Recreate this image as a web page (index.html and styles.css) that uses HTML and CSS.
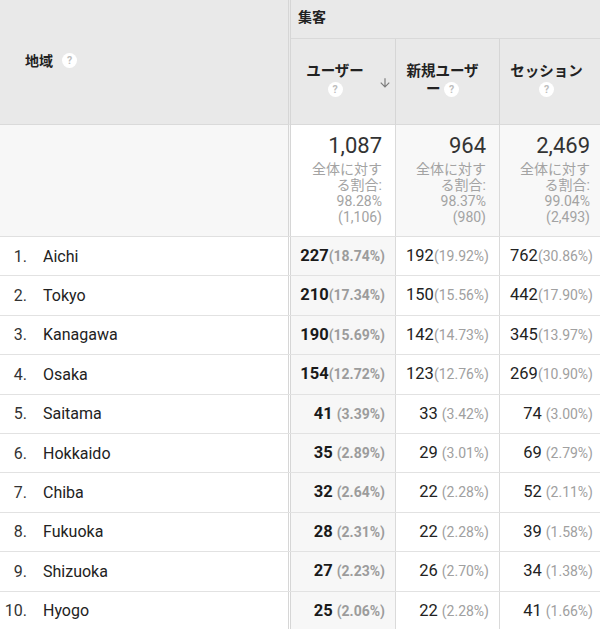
FILE: index.html
```html
<!DOCTYPE html>
<html lang="ja">
<head>
<meta charset="utf-8">
<link rel="stylesheet" href="styles.css">
</head>
<body>
<div class="report">
  <div class="head grid">
    <div class="dim-head"><span class="ht">地域</span><span class="help">?</span></div>
    <div class="group">集客</div>
    <div class="mh mh-sorted">
      <div class="mh-text"><div>ユーザー</div><div><span class="help">?</span></div></div>
      <svg class="sort" viewBox="0 0 24 24" width="14" height="14"><path d="M20 12l-1.41-1.41L13 16.17V4h-2v12.17l-5.58-5.59L4 12l8 8 8-8z" fill="#7a7a7a"/></svg>
    </div>
    <div class="mh">
      <div class="mh-text"><div>新規ユーザ</div><div>ー <span class="help">?</span></div></div>
    </div>
    <div class="mh">
      <div class="mh-text"><div>セッション</div><div><span class="help">?</span></div></div>
    </div>
  </div>

  <div class="summary grid">
    <div class="dim"></div>
    <div class="m sorted"><div class="big">1,087</div><div class="sub"><span>全体に対す</span><span>る割合:</span><span>98.28%</span><span>(1,106)</span></div></div>
    <div class="m"><div class="big">964</div><div class="sub"><span>全体に対す</span><span>る割合:</span><span>98.37%</span><span>(980)</span></div></div>
    <div class="m"><div class="big">2,469</div><div class="sub"><span>全体に対す</span><span>る割合:</span><span>99.04%</span><span>(2,493)</span></div></div>
  </div>

  <div class="row grid"><div class="dim"><span class="n">1.</span><span class="name">Aichi</span></div><div class="m sorted"><b>227</b><i>(18.74%)</i></div><div class="m"><b>192</b><i>(19.92%)</i></div><div class="m"><b>762</b><i>(30.86%)</i></div></div>
  <div class="row grid"><div class="dim"><span class="n">2.</span><span class="name">Tokyo</span></div><div class="m sorted"><b>210</b><i>(17.34%)</i></div><div class="m"><b>150</b><i>(15.56%)</i></div><div class="m"><b>442</b><i>(17.90%)</i></div></div>
  <div class="row grid"><div class="dim"><span class="n">3.</span><span class="name">Kanagawa</span></div><div class="m sorted"><b>190</b><i>(15.69%)</i></div><div class="m"><b>142</b><i>(14.73%)</i></div><div class="m"><b>345</b><i>(13.97%)</i></div></div>
  <div class="row grid"><div class="dim"><span class="n">4.</span><span class="name">Osaka</span></div><div class="m sorted"><b>154</b><i>(12.72%)</i></div><div class="m"><b>123</b><i>(12.76%)</i></div><div class="m"><b>269</b><i>(10.90%)</i></div></div>
  <div class="row grid"><div class="dim"><span class="n">5.</span><span class="name">Saitama</span></div><div class="m sorted"><b>41</b> <i>(3.39%)</i></div><div class="m"><b>33</b> <i>(3.42%)</i></div><div class="m"><b>74</b> <i>(3.00%)</i></div></div>
  <div class="row grid"><div class="dim"><span class="n">6.</span><span class="name">Hokkaido</span></div><div class="m sorted"><b>35</b> <i>(2.89%)</i></div><div class="m"><b>29</b> <i>(3.01%)</i></div><div class="m"><b>69</b> <i>(2.79%)</i></div></div>
  <div class="row grid"><div class="dim"><span class="n">7.</span><span class="name">Chiba</span></div><div class="m sorted"><b>32</b> <i>(2.64%)</i></div><div class="m"><b>22</b> <i>(2.28%)</i></div><div class="m"><b>52</b> <i>(2.11%)</i></div></div>
  <div class="row grid"><div class="dim"><span class="n">8.</span><span class="name">Fukuoka</span></div><div class="m sorted"><b>28</b> <i>(2.31%)</i></div><div class="m"><b>22</b> <i>(2.28%)</i></div><div class="m"><b>39</b> <i>(1.58%)</i></div></div>
  <div class="row grid"><div class="dim"><span class="n">9.</span><span class="name">Shizuoka</span></div><div class="m sorted"><b>27</b> <i>(2.23%)</i></div><div class="m"><b>26</b> <i>(2.70%)</i></div><div class="m"><b>34</b> <i>(1.38%)</i></div></div>
  <div class="row grid"><div class="dim"><span class="n">10.</span><span class="name">Hyogo</span></div><div class="m sorted"><b>25</b> <i>(2.06%)</i></div><div class="m"><b>22</b> <i>(2.28%)</i></div><div class="m"><b>41</b> <i>(1.66%)</i></div></div>
</div>
</body>
</html>
```

FILE: styles.css
```css
html, body {
  margin: 0;
  padding: 0;
  background: #ffffff;
  overflow: hidden;
}
body {
  width: 600px;
  height: 629px;
  font-family: Roboto, "Noto Sans CJK JP", sans-serif;
  color: #222222;
}
.report {
  width: 603px;
}
.grid {
  display: grid;
  grid-template-columns: 291px 104px 104px 104px;
  box-sizing: border-box;
}
.grid > * {
  box-sizing: border-box;
}

/* header */
.head {
  grid-template-rows: 39px 86px;
  background: #e9e9e9;
}
.dim-head {
  grid-row: 1 / span 2;
  grid-column: 1;
  border-right: 3px double #d6d6d6;
  border-bottom: 1px solid #dadada;
  display: flex;
  align-items: center;
  padding: 0 0 4px 25px;
  font-weight: 700;
  font-size: 14px;
}
.dim-head .help {
  margin-left: 9px;
}
.group {
  grid-column: 2 / span 3;
  grid-row: 1;
  border-bottom: 1px solid #d9d9d9;
  font-weight: 700;
  font-size: 14px;
  padding: 7px 0 0 7px;
  line-height: 20px;
}
.mh {
  grid-row: 2;
  border-bottom: 1px solid #dadada;
  display: flex;
  align-items: center;
  justify-content: center;
  padding: 0 16px 0 6px;
  font-weight: 700;
  font-size: 14.5px;
  line-height: 18px;
  position: relative;
}
.mh + .mh {
  border-left: 1px solid #d6d6d6;
}
.mh-sorted {
  padding: 0 26px 0 10px;
}
.mh-text {
  text-align: center;
  padding-bottom: 2px;
}
.sort {
  position: absolute;
  right: 3px;
  top: 37px;
}
.help {
  display: inline-flex;
  align-items: center;
  justify-content: center;
  width: 15px;
  height: 15px;
  border-radius: 50%;
  background: #ffffff;
  color: #bdbdbd;
  font-family: Roboto, sans-serif;
  font-size: 10.5px;
  font-weight: 700;
  line-height: 15px;
  vertical-align: middle;
}

/* summary */
.summary {
  height: 112px;
  border-bottom: 1px solid #e0e0e0;
}
.summary .dim {
  background: #f7f7f7;
  border-right: 3px double #d6d6d6;
}
.summary .m {
  background: #f8f8f8;
  text-align: right;
  padding: 9px 13px 0 10px;
}
.summary .m + .m {
  border-left: 1px solid #dadada;
}
.summary .m.sorted {
  background: #ffffff;
}
.big {
  font-size: 22px;
  line-height: 24px;
  color: #333333;
}
.sub {
  margin-top: 3px;
  display: flex;
  flex-direction: column;
  font-size: 14px;
  line-height: 16px;
  color: #a3a3a3;
}

/* rows */
.row {
  height: 39.4px;
  border-bottom: 1px solid #e2e2e2;
}
.row .dim {
  border-right: 3px double #d6d6d6;
  display: flex;
  align-items: center;
  font-size: 16px;
}
.n {
  width: 27px;
  text-align: right;
  color: #333333;
}
.name {
  margin-left: 16px;
  color: #222222;
}
.row .m {
  text-align: right;
  padding-right: 10px;
  line-height: 38.4px;
  white-space: pre;
}
.row .m + .m {
  border-left: 1px solid #dadada;
}
.row .m.sorted {
  background: #f7f7f7;
}
.m b {
  font-size: 16.5px;
  font-weight: 400;
  color: #222222;
}
.m i {
  font-style: normal;
  font-size: 14px;
  color: #a0a0a0;
}
.m.sorted b {
  font-weight: 700;
  color: #1a1a1a;
}
.m.sorted i {
  font-weight: 700;
  color: #9c9c9c;
}
```
